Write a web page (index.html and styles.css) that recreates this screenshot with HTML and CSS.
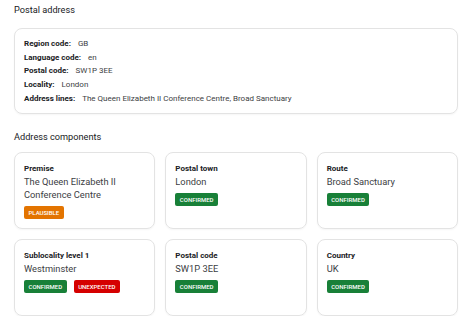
FILE: index.html
```html
<!DOCTYPE html>
<html lang="en">
<head>
<meta charset="utf-8">
<link rel="stylesheet" href="styles.css">
</head>
<body>
<div class="page">
  <h2 class="section-title">Postal address</h2>
  <div class="panel">
    <div class="row"><span class="key">Region code:</span><span class="val">GB</span></div>
    <div class="row"><span class="key">Language code:</span><span class="val">en</span></div>
    <div class="row"><span class="key">Postal code:</span><span class="val">SW1P 3EE</span></div>
    <div class="row"><span class="key">Locality:</span><span class="val">London</span></div>
    <div class="row"><span class="key">Address lines:</span><span class="val">The Queen Elizabeth II Conference Centre, Broad Sanctuary</span></div>
  </div>
  <h2 class="section-title second">Address components</h2>
  <div class="grid">
    <div class="card">
      <div class="label">Premise</div>
      <div class="value">The Queen Elizabeth II Conference Centre</div>
      <div class="badges"><span class="badge plausible">PLAUSIBLE</span></div>
    </div>
    <div class="card">
      <div class="label">Postal town</div>
      <div class="value">London</div>
      <div class="badges"><span class="badge confirmed">CONFIRMED</span></div>
    </div>
    <div class="card">
      <div class="label">Route</div>
      <div class="value">Broad Sanctuary</div>
      <div class="badges"><span class="badge confirmed">CONFIRMED</span></div>
    </div>
    <div class="card">
      <div class="label">Sublocality level 1</div>
      <div class="value">Westminster</div>
      <div class="badges"><span class="badge confirmed">CONFIRMED</span><span class="badge unexpected">UNEXPECTED</span></div>
    </div>
    <div class="card">
      <div class="label">Postal code</div>
      <div class="value">SW1P 3EE</div>
      <div class="badges"><span class="badge confirmed">CONFIRMED</span></div>
    </div>
    <div class="card">
      <div class="label">Country</div>
      <div class="value">UK</div>
      <div class="badges"><span class="badge confirmed">CONFIRMED</span></div>
    </div>
  </div>
</div>
</body>
</html>
```

FILE: styles.css
```css
* { box-sizing: border-box; }
html, body { margin: 0; padding: 0; background: #fff; }
body {
  font-family: Roboto, "Liberation Sans", sans-serif;
  color: #202124;
}
.page {
  padding: 3px 16px 0 14px;
}
.section-title {
  font-size: 9.2px;
  font-weight: 400;
  margin: 0;
  height: 14px;
  line-height: 14px;
  color: #202124;
}
.panel {
  margin-top: 11px;
  border: 1px solid #e3e3e3;
  border-radius: 8px;
  padding: 8px 10px 7px 9px;
  box-shadow: 0 1px 2px rgba(0,0,0,0.04);
}
.row {
  font-size: 8px;
  line-height: 13.7px;
  display: flex;
  gap: 7px;
}
.key { font-weight: 700; color: #202124; }
.val { color: #3c4043; }
.second { margin-top: 16px; }
.grid {
  margin-top: 8px;
  display: grid;
  grid-template-columns: repeat(3, 1fr);
  grid-auto-rows: 77px;
  gap: 10px;
}
.card {
  border: 1px solid #e3e3e3;
  border-radius: 8px;
  padding: 11px 9px 9px 9px;
  box-shadow: 0 1px 2px rgba(0,0,0,0.04);
}
.label {
  font-size: 8px;
  font-weight: 700;
  line-height: 10px;
}
.value {
  font-size: 9.3px;
  line-height: 13.3px;
  color: #3c4043;
  margin-top: 1px;
}
.badges {
  display: flex;
  gap: 7px;
  margin-top: 5px;
}
.badge {
  display: inline-block;
  font-size: 6px;
  font-weight: 500;
  color: #fff;
  line-height: 13px;
  height: 13px;
  padding: 0 4.5px;
  border-radius: 2px;
}
.confirmed { background: #188038; }
.plausible { background: #e37400; }
.unexpected { background: #d50000; }
```
